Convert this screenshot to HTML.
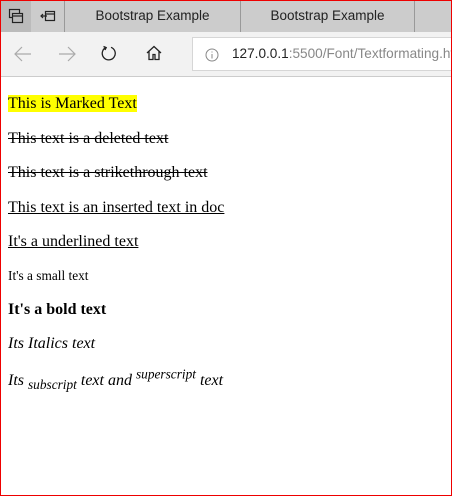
<!DOCTYPE html>
<html><head><style>
*{box-sizing:border-box}
html,body{margin:0;padding:0;width:452px;height:496px;overflow:hidden;background:#fff}
.frame{position:absolute;left:0;top:0;width:452px;height:496px;border:1px solid #e00;pointer-events:none;z-index:10}
.tabs{position:absolute;left:0;top:0;width:452px;height:32px;background:#ccc;font-family:"Liberation Sans",sans-serif;font-size:13.5px;color:#222}
.tab{position:absolute;top:0;height:32px;line-height:32px;text-align:center;border-right:1px solid #999}
.tb{position:absolute;left:0;top:32px;width:452px;height:45px;background:#f2f2f2;border-bottom:1px solid #ccc}
.addr{position:absolute;left:192px;top:5px;width:260px;height:34px;overflow:hidden;background:#fff;border:1px solid #d6d6d6;border-right:none;font-family:"Liberation Sans",sans-serif;font-size:13.6px;line-height:32px;padding-left:39px;color:#888;white-space:nowrap}
.content{position:absolute;left:0;top:0;width:452px;font-family:"Liberation Serif",serif;font-size:16px;color:#000}
.content p{position:absolute;left:8px;margin:0;line-height:18px;white-space:nowrap}
mark{background:#ff0;color:#000}
</style></head><body>
<div class="tabs">
 <div style="position:absolute;left:0;top:0;width:31px;height:32px;background:#bbb"></div>
 <svg style="position:absolute;left:8px;top:8px" width="16" height="16" viewBox="0 0 16 16" fill="none" stroke="#222" stroke-width="1.2"><rect x="1.5" y="1.5" width="10" height="8"/><rect x="4.5" y="5.5" width="10" height="9" fill="#bbb"/><line x1="4.5" y1="8" x2="14.5" y2="8"/></svg>
 <svg style="position:absolute;left:40px;top:9px" width="16" height="14" viewBox="0 0 16 14" fill="none" stroke="#222" stroke-width="1.2"><rect x="5.5" y="2.5" width="9" height="9"/><line x1="5.5" y1="5" x2="14.5" y2="5"/><path d="M1 7h6M3 5l-2 2 2 2"/></svg>
 <div class="tab" style="left:64px;width:177px;border-left:1px solid #999">Bootstrap Example</div>
 <div class="tab" style="left:241px;width:174px">Bootstrap Example</div>
</div>
<div class="tb">
 <svg style="position:absolute;left:14px;top:14px" width="18" height="16" viewBox="0 0 18 16" fill="none" stroke="#aaa" stroke-width="1.2"><path d="M17 8H1M8 1L1 8l7 7"/></svg>
 <svg style="position:absolute;left:58px;top:14px" width="18" height="16" viewBox="0 0 18 16" fill="none" stroke="#aaa" stroke-width="1.2"><path d="M1 8h16M10 1l7 7-7 7"/></svg>
 <svg style="position:absolute;left:101px;top:13px" width="16" height="16" viewBox="0 0 16 16" fill="none" stroke="#222" stroke-width="1.3"><path d="M5 2.5A6.5 6.5 0 1 0 10 2.3"/><path d="M2.5 1.5L5.2 2.6 4 5"/></svg>
 <svg style="position:absolute;left:146px;top:13px" width="16" height="16" viewBox="0 0 16 16" fill="none" stroke="#222" stroke-width="1.3"><path d="M1 8L8 1.5 15 8M3 6.5V14.5h4v-5h2v5h4V6.5"/></svg>
 <div class="addr"><svg style="position:absolute;left:12px;top:10px" width="14" height="14" viewBox="0 0 14 14" fill="none" stroke="#888" stroke-width="1"><circle cx="7" cy="7" r="6"/><path d="M7 6v4.5M7 3.5v1"/></svg><span style="color:#222">127.0.0.1</span>:5500/Font/Textformating.html</div>
</div>
<div class="content">
<p style="top:95px"><mark>This is Marked Text</mark></p>
<p style="top:130px"><del>This text is a deleted text</del></p>
<p style="top:164px"><s>This text is a strikethrough text</s></p>
<p style="top:199px"><ins>This text is an inserted text in doc</ins></p>
<p style="top:233px"><u>It's a underlined text</u></p>
<p style="top:267px"><small>It's a small text</small></p>
<p style="top:301px"><b>It's a bold text</b></p>
<p style="top:335px"><i>Its Italics text</i></p>
<p style="top:366px"><i>Its <sub>subscript</sub> text and <sup>superscript</sup> text</i></p>
</div>
<div class="frame"></div>
</body></html>
